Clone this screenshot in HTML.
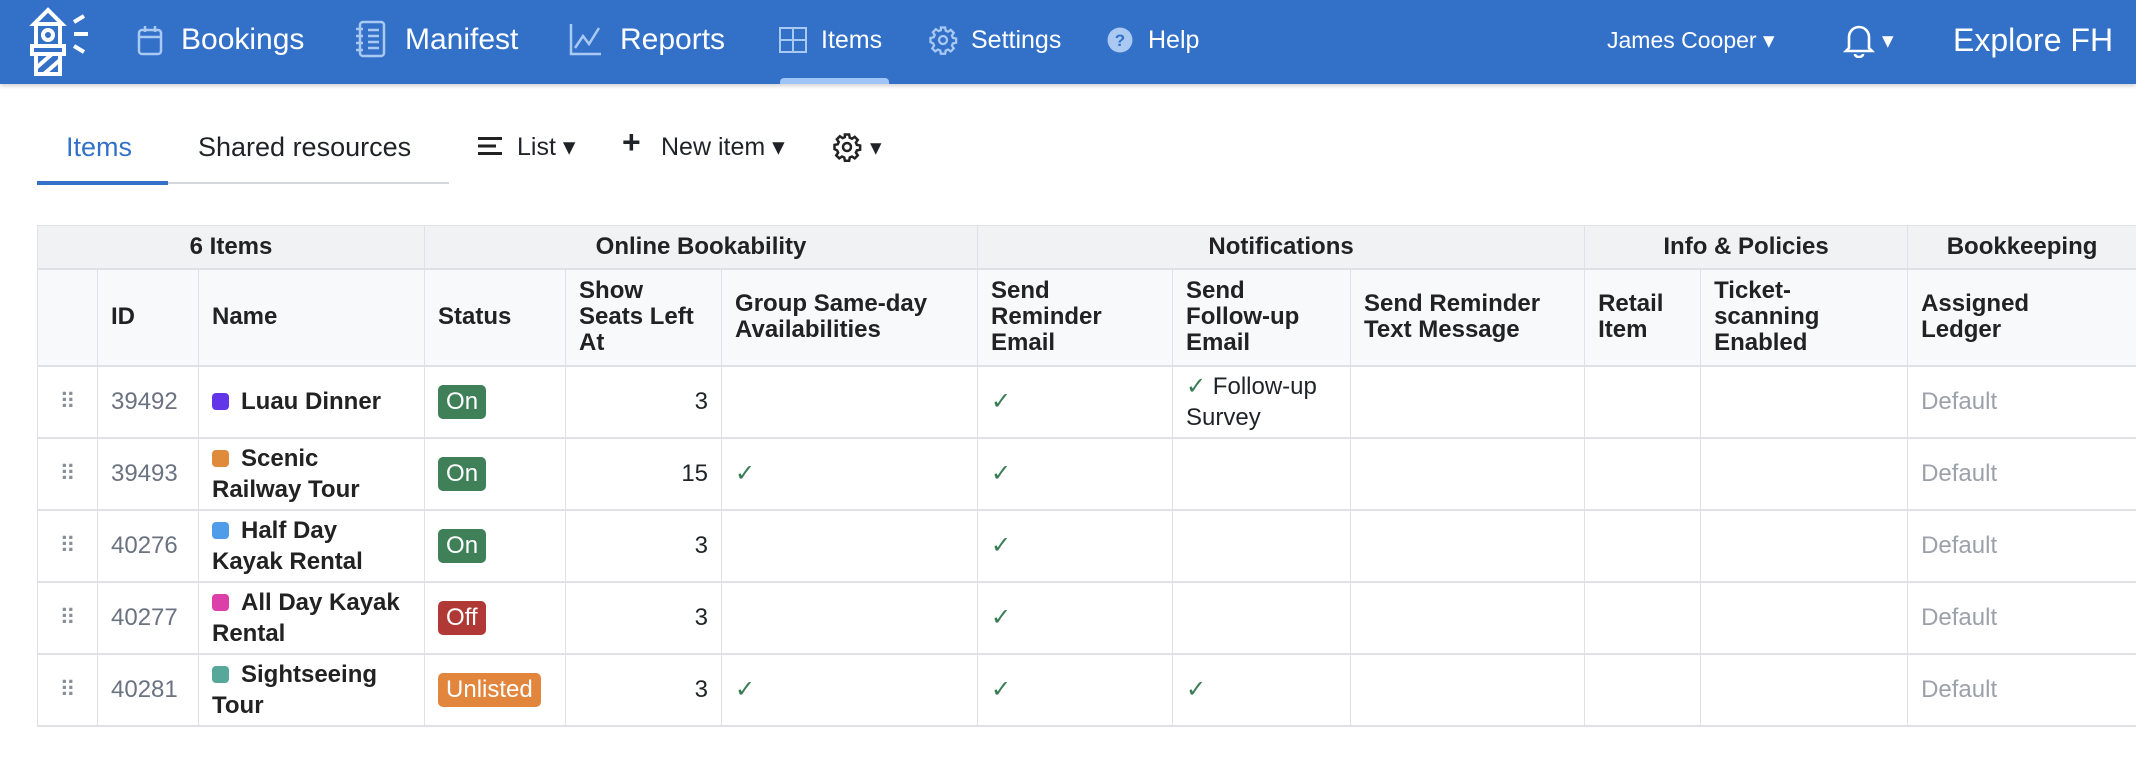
<!DOCTYPE html>
<html><head><meta charset="utf-8"><style>
*{box-sizing:border-box;margin:0;padding:0}
body{width:2136px;height:764px;overflow:hidden;background:#fff;font-family:"Liberation Sans",sans-serif;color:#1f2328;position:relative}
.nav{position:absolute;left:0;top:0;width:2136px;height:84px;background:#3371c9;box-shadow:0 2px 4px rgba(0,0,0,.18);color:#fff}
.nav .t{position:absolute;top:0;line-height:80px;white-space:nowrap}
.nav svg{position:absolute}
.ind{position:absolute;left:780px;top:78px;width:109px;height:6px;background:#9ec5f5;border-radius:4px 4px 0 0}
.tb{position:absolute;top:132px;font-size:27px;white-space:nowrap}
table{position:absolute;left:37px;top:225px;border-collapse:collapse;table-layout:fixed;width:2099px;font-size:24px}
td,th{border:1px solid #dfe1e5;padding:0 13px;vertical-align:middle;text-align:left}
tr{border-bottom:2px solid #dfe1e5}
tr.g th{background:#f1f2f4;height:43px;text-align:center;font-weight:bold;font-size:24px;color:#222}
tr.s th{background:#f8f9fb;height:97px;font-weight:bold;line-height:26px;color:#222}
tr.r td{height:72px;line-height:31px}
td.id{color:#6b7280}
td.nm{font-weight:bold;color:#222}
.sq{display:inline-block;width:17px;height:17px;border-radius:4px;margin-right:12px;vertical-align:-1px}
.b{display:inline-block;color:#fff;border-radius:5px;padding:0 8px;line-height:34px;height:34px;font-size:24px}
.on{background:#3f8059}.off{background:#b13935}.un{background:#e2853d}
.ck{color:#3a7d55}
.df{color:#9aa1a9}
.dr{text-align:center;color:#8a9099;font-size:22px}
.num{text-align:right}
</style></head><body>
<div class="nav">
<svg style="left:22px;top:6px" width="76" height="70" viewBox="0 0 76 70" fill="none" stroke="#fff" stroke-width="4"><path d="M26 4 L12 18 H40 Z"/><rect x="14" y="18" width="24" height="22"/><circle cx="26" cy="29" r="5"/><path d="M10 40 H42 V48 H10 Z"/><path d="M14 48 V68 H38 V48 M14 62 L30 48 M22 68 L38 54"/><path d="M52 16 L62 10 M52 28 H66 M52 40 L62 46"/></svg>
<svg style="left:137px;top:24px" width="26" height="32" viewBox="0 0 26 32" fill="none" stroke="#a9c8f2" stroke-width="2.5"><rect x="2" y="6" width="22" height="24" rx="3"/><path d="M2 13 H24 M8 2 V8 M18 2 V8"/></svg>
<div class="t" style="left:181px;font-size:30px">Bookings</div>
<svg style="left:354px;top:20px" width="34" height="38" viewBox="0 0 34 38" fill="none" stroke="#a9c8f2" stroke-width="2.5"><rect x="6" y="2" width="24" height="34" rx="3"/><path d="M2 9 H9 M2 16 H9 M2 23 H9 M2 30 H9 M14 10 H25 M14 16 H25 M14 22 H25 M14 28 H25"/></svg>
<div class="t" style="left:405px;font-size:30px">Manifest</div>
<svg style="left:569px;top:22px" width="34" height="34" viewBox="0 0 34 34" fill="none" stroke="#a9c8f2" stroke-width="2.5"><path d="M2 2 V32 H32 M6 26 L14 14 L20 22 L30 6"/></svg>
<div class="t" style="left:620px;font-size:30px">Reports</div>
<svg style="left:779px;top:27px" width="28" height="26" viewBox="0 0 28 26" fill="none" stroke="#a9c8f2" stroke-width="2"><rect x="1" y="1" width="26" height="24"/><path d="M14 1 V25 M1 13 H27"/></svg>
<div class="t" style="left:821px;font-size:25px">Items</div>
<svg style="left:928px;top:25px" width="30" height="30" viewBox="0 0 24 24" fill="none" stroke="#a9c8f2" stroke-width="1.8"><circle cx="12" cy="12" r="3.2"/><path d="M10.3 2h3.4l.5 2.6 1.8.8 2.2-1.5 2.4 2.4-1.5 2.2.8 1.8 2.6.5v3.4l-2.6.5-.8 1.8 1.5 2.2-2.4 2.4-2.2-1.5-1.8.8-.5 2.6h-3.4l-.5-2.6-1.8-.8-2.2 1.5-2.4-2.4 1.5-2.2-.8-1.8L2 13.7v-3.4l2.6-.5.8-1.8-1.5-2.2 2.4-2.4 2.2 1.5 1.8-.8z"/></svg>
<div class="t" style="left:971px;font-size:25px">Settings</div>
<svg style="left:1107px;top:27px" width="26" height="26" viewBox="0 0 26 26"><circle cx="13" cy="13" r="12.5" fill="#a9c8f2"/><text x="13" y="19" text-anchor="middle" font-family="Liberation Sans" font-weight="bold" font-size="17" fill="#3371c9">?</text></svg>
<div class="t" style="left:1148px;font-size:25px">Help</div>
<div class="t" style="left:1607px;font-size:23px">James Cooper ▾</div>
<svg style="left:1843px;top:22px" width="32" height="36" viewBox="0 0 32 36" fill="none" stroke="#fff" stroke-width="2.6"><path d="M6 26 V15 a10 10 0 0 1 20 0 V26 L29 29 H3 Z M12 32 a4 3 0 0 0 8 0"/></svg>
<div class="t" style="left:1882px;font-size:23px">▾</div>
<div class="t" style="left:1953px;font-size:32px">Explore FH</div>
<div class="ind"></div>
</div>
<div class="tb" style="left:66px;color:#3371c9">Items</div>
<div class="tb" style="left:198px">Shared resources</div>
<div style="position:absolute;left:37px;top:182px;width:412px;height:2px;background:#d3d6db"></div>
<div style="position:absolute;left:37px;top:181px;width:131px;height:4px;background:#3371c9"></div>
<svg style="position:absolute;left:478px;top:136px" width="24" height="20" viewBox="0 0 24 20" fill="#222"><rect y="1" width="24" height="3"/><rect y="8.5" width="18" height="3"/><rect y="16" width="24" height="3"/></svg>
<div class="tb" style="left:517px;font-size:25px;top:132px">List ▾</div>
<div class="tb" style="left:622px;font-size:32px;top:124px;font-weight:bold">+</div>
<div class="tb" style="left:661px;font-size:25px;top:132px">New item ▾</div>
<svg style="position:absolute;left:832px;top:132px" width="30" height="30" viewBox="0 0 24 24" fill="none" stroke="#222" stroke-width="2"><circle cx="12" cy="12" r="3.2"/><path d="M10.3 2h3.4l.5 2.6 1.8.8 2.2-1.5 2.4 2.4-1.5 2.2.8 1.8 2.6.5v3.4l-2.6.5-.8 1.8 1.5 2.2-2.4 2.4-2.2-1.5-1.8.8-.5 2.6h-3.4l-.5-2.6-1.8-.8-2.2 1.5-2.4-2.4 1.5-2.2-.8-1.8L2 13.7v-3.4l2.6-.5.8-1.8-1.5-2.2 2.4-2.4 2.2 1.5 1.8-.8z"/></svg>
<div class="tb" style="left:870px;font-size:23px;top:134px">▾</div>
<table>
<colgroup><col style="width:60px"><col style="width:101px"><col style="width:226px"><col style="width:141px"><col style="width:156px"><col style="width:256px"><col style="width:195px"><col style="width:178px"><col style="width:234px"><col style="width:116px"><col style="width:207px"><col style="width:229px"></colgroup>
<tr class="g"><th colspan="3">6 Items</th><th colspan="3">Online Bookability</th><th colspan="3">Notifications</th><th colspan="2">Info &amp; Policies</th><th>Bookkeeping</th></tr>
<tr class="s"><th></th><th>ID</th><th>Name</th><th>Status</th><th>Show<br>Seats Left<br>At</th><th>Group Same-day<br>Availabilities</th><th>Send<br>Reminder<br>Email</th><th>Send<br>Follow-up<br>Email</th><th>Send Reminder<br>Text Message</th><th>Retail<br>Item</th><th>Ticket-<br>scanning<br>Enabled</th><th>Assigned<br>Ledger</th></tr>
<tr class="r"><td class="dr">⠿</td><td class="id">39492</td><td class="nm"><span class="sq" style="background:#6236e8"></span>Luau Dinner</td><td><span class="b on">On</span></td><td class="num">3</td><td></td><td class="ck">✓</td><td><span class="ck">✓</span> Follow-up<br>Survey</td><td></td><td></td><td></td><td class="df">Default</td></tr>
<tr class="r"><td class="dr">⠿</td><td class="id">39493</td><td class="nm"><span class="sq" style="background:#e08a3c"></span>Scenic<br>Railway Tour</td><td><span class="b on">On</span></td><td class="num">15</td><td class="ck">✓</td><td class="ck">✓</td><td></td><td></td><td></td><td></td><td class="df">Default</td></tr>
<tr class="r"><td class="dr">⠿</td><td class="id">40276</td><td class="nm"><span class="sq" style="background:#4f9de8"></span>Half Day<br>Kayak Rental</td><td><span class="b on">On</span></td><td class="num">3</td><td></td><td class="ck">✓</td><td></td><td></td><td></td><td></td><td class="df">Default</td></tr>
<tr class="r"><td class="dr">⠿</td><td class="id">40277</td><td class="nm"><span class="sq" style="background:#dc3fa7"></span>All Day Kayak<br>Rental</td><td><span class="b off">Off</span></td><td class="num">3</td><td></td><td class="ck">✓</td><td></td><td></td><td></td><td></td><td class="df">Default</td></tr>
<tr class="r"><td class="dr">⠿</td><td class="id">40281</td><td class="nm"><span class="sq" style="background:#57a89a"></span>Sightseeing<br>Tour</td><td><span class="b un">Unlisted</span></td><td class="num">3</td><td class="ck">✓</td><td class="ck">✓</td><td class="ck">✓</td><td></td><td></td><td></td><td class="df">Default</td></tr>
</table>
</body></html>
